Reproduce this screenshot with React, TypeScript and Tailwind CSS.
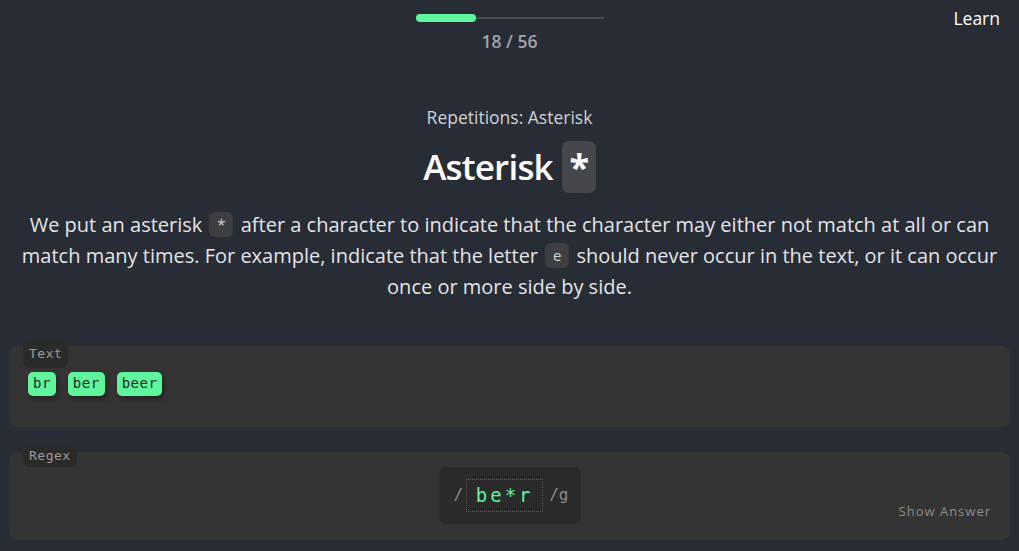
import React from "react";

const mono = { fontFamily: '"DejaVu Sans Mono", "Liberation Mono", monospace' };

function Chip({ children }: { children: React.ReactNode }) {
  return (
    <span
      className="inline-flex items-center h-[24px] px-[5px] rounded-[5px] bg-[#5ef59c] text-[#1f2a24] text-[14px] tracking-[0.5px] shadow-[2px_3px_5px_rgba(0,0,0,0.35)]"
      style={mono}
    >
      {children}
    </span>
  );
}

function Code({ children }: { children: React.ReactNode }) {
  return (
    <span className="inline-flex items-center justify-center align-middle w-[24px] h-[25px] mx-[2px] rounded-[6px] bg-[#3d3f43] text-[#d6d6d6] text-[15px] relative -top-[2px]">
      {children}
    </span>
  );
}

export default function App(): React.ReactElement {
  return (
    <div
      className="w-[1019px] h-[551px] bg-[#282c35] text-white overflow-hidden flex flex-col"
      style={{ fontFamily: '"Open Sans", sans-serif' }}
    >
      <header className="relative h-[56px] flex flex-col items-center pt-[14px]">
        <div className="relative w-[188px] h-[8px] flex items-center">
          <div className="w-full h-[2px] bg-[#4a4c50]" />
          <div className="absolute left-0 top-0 h-[8px] w-[60px] rounded-full bg-[#5ef59c]" />
        </div>
        <div className="mt-[11px] text-[17.5px] font-semibold text-[#a0a3a8] leading-none">
          18 / 56
        </div>
        <span className="absolute right-[19px] top-[5px] text-[17.5px] text-white">Learn</span>
      </header>

      <section className="flex flex-col items-center mt-[53px]">
        <p className="text-[17.5px] text-[#cfd1d4] leading-none">Repetitions: Asterisk</p>
        <h1 className="mt-[14px] flex items-center gap-[9px] text-[35px] font-semibold tracking-[-0.8px] leading-none">
          Asterisk
          <span className="inline-flex items-start justify-center w-[34px] h-[52px] pt-[8px] rounded-[7px] bg-[#45474b] text-[36px] font-bold">
            *
          </span>
        </h1>
        <p className="mt-[16px] px-[8px] text-center text-[20px] leading-[31px] text-[#e3e4e6]">
          We put an asterisk <Code>*</Code> after a character to indicate that the character may either not match at all or can
          match many times. For example, indicate that the letter <Code>e</Code> should never occur in the text, or it can occur
          once or more side by side.
        </p>
      </section>

      <section className="relative mx-[9px] mt-[44px] h-[81px] rounded-[8px] bg-[#343434]">
        <span
          className="absolute left-[14px] -top-[6px] px-[6px] h-[28px] flex items-center rounded-[6px] bg-[#2a2a2a] text-[13px] text-[#9a9a9a] tracking-[0.5px]"
          style={mono}
        >
          Text
        </span>
        <div className="flex items-start gap-[12px] pl-[19px] pt-[26px]">
          <Chip>br</Chip>
          <Chip>ber</Chip>
          <Chip>beer</Chip>
        </div>
      </section>

      <section className="relative mx-[9px] mt-[25px] h-[88px] rounded-[8px] bg-[#343434] flex justify-center">
        <span
          className="absolute left-[14px] -top-[7px] px-[6px] h-[22px] flex items-center rounded-[6px] bg-[#2a2a2a] text-[13px] text-[#9a9a9a] tracking-[0.5px]"
          style={mono}
        >
          Regex
        </span>
        <div
          className="mt-[15px] h-[57px] w-[142px] rounded-[7px] bg-[#2a2a2a] flex items-center justify-center gap-[4px] text-[#8a8a8a]"
          style={mono}
        >
          <span className="text-[16px] relative left-[3px]">/</span>
          <span className="mx-[2px] h-[33px] w-[77px] border border-dotted border-[#5a5a5a] flex items-center justify-center text-[19px] tracking-[3px] text-[#5ef59c]">
            be*r
          </span>
          <span className="text-[16px]">/g</span>
        </div>
        <span className="absolute right-[19px] bottom-[18px] text-[13px] tracking-[1px] text-[#8c8c8c]">
          Show Answer
        </span>
      </section>
    </div>
  );
}
